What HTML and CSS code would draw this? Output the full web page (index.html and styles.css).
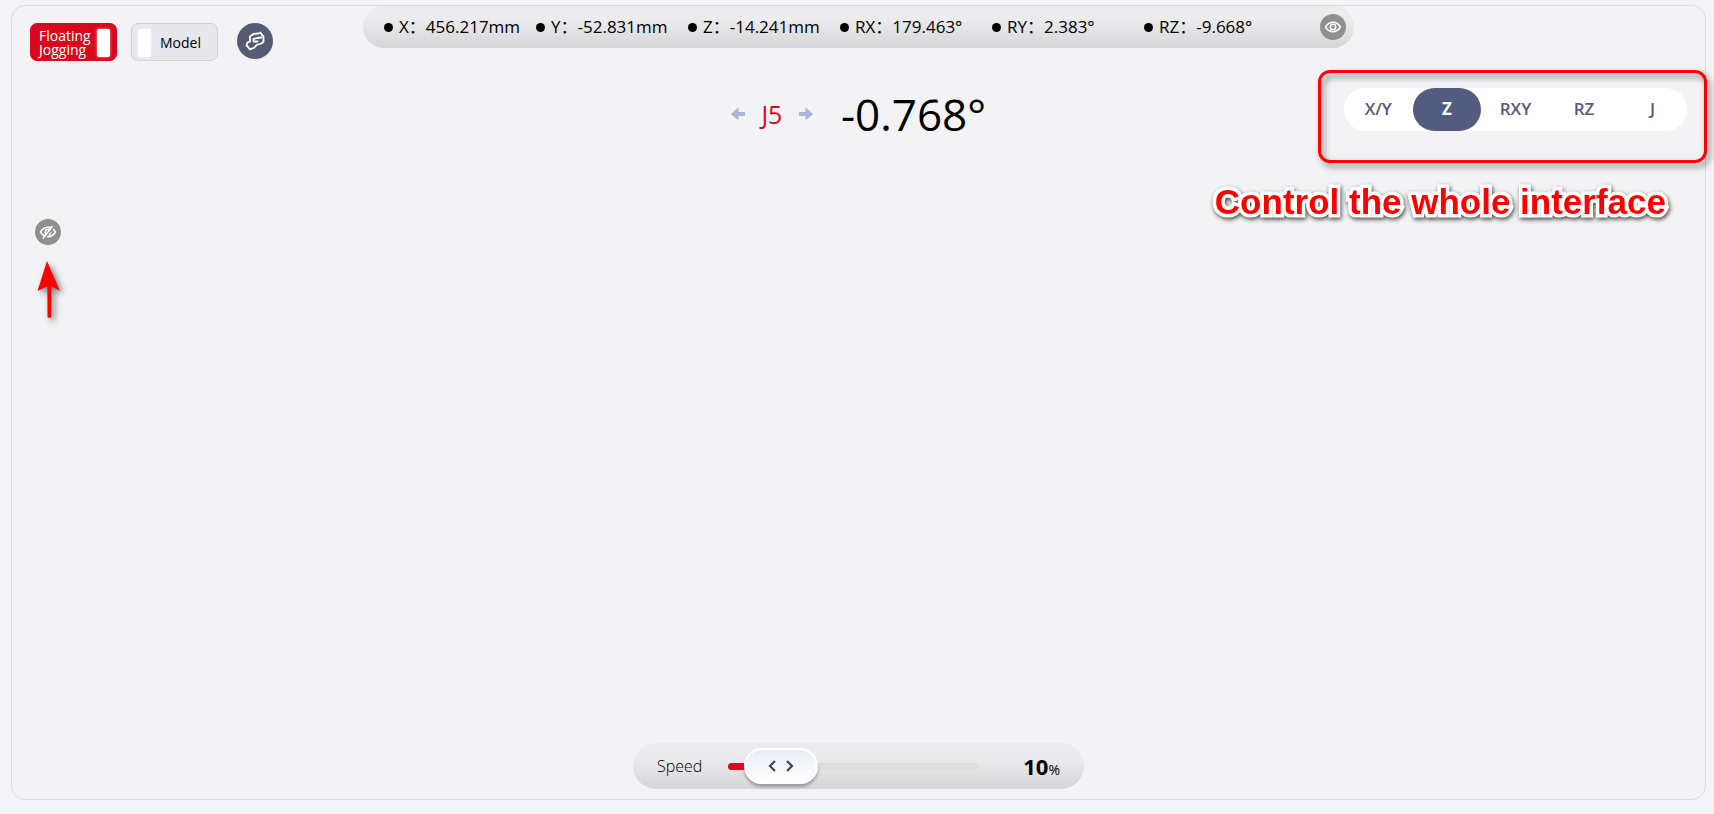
FILE: index.html
```
<!DOCTYPE html>
<html lang="en">
<head>
    <meta charset="UTF-8">
    <meta name="viewport" content="width=device-width, initial-scale=1.0">
    <title>Floating Jogging</title>
    <link rel="stylesheet" href="styles.css">
</head>
<body>
    <main class="panel">
        <header class="top-bar">
            <div class="tools">
                <button class="toggle toggle-on" type="button" aria-pressed="true">
                    <span class="toggle-text">Floating Jogging</span>
                    <span class="knob"></span>
                </button>
                <button class="toggle" type="button" aria-pressed="false">
                    <span class="knob"></span>
                    <span class="toggle-text">Model</span>
                </button>
                <button class="round-button" type="button" aria-label="Robot">
                    <svg width="36" height="36" viewBox="0 0 36 36" fill="none" stroke="#fff" stroke-width="1.8" stroke-linejoin="round" stroke-linecap="round">
                        <path d="M13 18.500V13.500L16.500 11L21.500 10.500L23.500 9.500L25 12L26.500 13.500V18.500L24.500 20.500L19.500 22L17.500 24.500L13 26.500L11.500 24.500L9.500 22.500L10.500 19.500Z"/>
                        <path d="M24.500 14.500L20 15L16.500 16V18.500H20.500"/>
                    </svg>
                </button>
            </div>

            <div class="coords">
                <ul class="coord-list">
                    <li>X：<span>456.217mm</span></li>
                    <li>Y：<span>-52.831mm</span></li>
                    <li>Z：<span>-14.241mm</span></li>
                    <li>RX：<span>179.463°</span></li>
                    <li>RY：<span>2.383°</span></li>
                    <li>RZ：<span>-9.668°</span></li>
                </ul>
                <button class="eye-button" type="button" aria-label="Hide coordinates">
                    <svg width="26" height="26" viewBox="0 0 26 26" fill="none" stroke="#fff" stroke-width="1.5">
                        <path d="M5.500 13C9.500 6.800 16.500 6.800 20.500 13C16.500 19.200 9.500 19.200 5.500 13Z"/>
                        <circle cx="13" cy="13" r="2.700"/>
                    </svg>
                </button>
            </div>
        </header>

        <section class="status-row">
            <div class="readout">
                <svg width="14" height="14" viewBox="0 0 14 14" fill="#a9b6dc"><path d="M0 7L7.500 .5V5H14V9H7.500V13.500Z"/></svg>
                <span class="joint">J5</span>
                <svg width="14" height="14" viewBox="0 0 14 14" fill="#a9b6dc"><path d="M14 7L6.500 .5V5H0V9H6.500V13.500Z"/></svg>
                <span class="angle">-0.768°</span>
            </div>

            <div class="modes">
                <nav class="tabs">
                    <button type="button">X/Y</button>
                    <button class="active" type="button">Z</button>
                    <button type="button">RXY</button>
                    <button type="button">RZ</button>
                    <button type="button">J</button>
                </nav>
                <div class="callout-frame"></div>
                <p class="callout-text">Control the whole interface</p>
            </div>
        </section>

        <aside class="side">
            <button class="eye-button" type="button" aria-label="Show controls">
                <svg width="26" height="26" viewBox="0 0 26 26" fill="none" stroke="#fff" stroke-width="1.5">
                    <path d="M5.500 13C9.500 6.800 16.500 6.800 20.500 13C16.500 19.200 9.500 19.200 5.500 13Z"/>
                    <circle cx="13" cy="13" r="2.700"/>
                    <path d="M9.300 19.700L18.700 7.700" stroke="#8f8f8f" stroke-width="2"/>
                    <path d="M8 19.500L17.500 7"/>
                </svg>
            </button>
            <svg class="callout-arrow" width="26" height="60" viewBox="0 0 26 60">
                <path d="M12 1L25 31L16.500 26.500L16.300 57Q14.500 59 12.500 57L12.300 26.500L2.500 31Z" fill="#f00"/>
            </svg>
        </aside>

        <footer class="speed">
            <label for="speed">Speed</label>
            <input type="range" id="speed" min="1" max="100" value="10">
            <output for="speed"><b id="speedValue">10</b>%</output>
        </footer>
    </main>

    <script>
        document.getElementById("speed").addEventListener("input", function () {
            document.getElementById("speedValue").textContent = this.value;
            this.style.setProperty("--fill", this.value + "%");
        });
    </script>
</body>
</html>
```

FILE: styles.css
```
* {
    box-sizing: border-box;
}

body {
    margin: 0;
    padding: 5px 8px 14px 11px;
    min-height: 100vh;
    display: flex;
    background-color: #f3f4f6;
    font-family: "Open Sans", "Noto Sans CJK SC", sans-serif;
    color: #000;
}

button {
    border: none;
    padding: 0;
    font-family: inherit;
    cursor: pointer;
}

svg {
    display: block;
}

.panel {
    flex: 1;
    display: flex;
    flex-direction: column;
    border: 1px solid #d9dbdf;
    border-radius: 14px;
    background-color: #f3f3f5;
}

/* Top bar */
.top-bar {
    display: grid;
    grid-template-columns: 1fr auto 1fr;
    align-items: start;
}

.tools {
    display: flex;
    margin: 17px 0 0 18px;
}

.toggle {
    display: flex;
    align-items: center;
    justify-content: space-between;
    width: 87px;
    height: 38px;
    margin-right: 14px;
    padding: 2px 16px 0 6px;
    border: 1px solid #d0d3da;
    border-radius: 7px;
    background-color: #e6e8ee;
    color: #000;
    font-size: 14px;
    line-height: 14px;
    text-align: left;
}

.toggle-on {
    padding: 2px 6px 0 8px;
    border-color: #d9091d;
    background-color: #d9091d;
    color: #fff;
}

.toggle-on .toggle-text {
    width: 54px;
}

.knob {
    width: 13px;
    height: 28px;
    border-radius: 2px;
    background-color: #fff;
    box-shadow: 0 0 3px rgba(255, 255, 255, 0.6);
}

.round-button {
    width: 36px;
    height: 36px;
    margin-left: 5px;
    border-radius: 50%;
    background-color: #565b74;
}

/* Coordinates */
.coords {
    display: flex;
    align-items: center;
    justify-content: space-between;
    width: 991px;
    height: 42px;
    padding: 0 8px 0 21px;
    border-radius: 21px;
    background: linear-gradient(#ececee 30%, #d6d6d8);
}

.coord-list {
    display: flex;
    margin: 0;
    padding: 0;
    list-style: none;
    font-size: 17px;
    font-weight: 380;
    line-height: 24px;
}

.coord-list li {
    display: flex;
    align-items: center;
    width: 152px;
    white-space: nowrap;
}

.coord-list li::before {
    content: "";
    width: 9px;
    height: 9px;
    margin-right: 6px;
    border-radius: 50%;
    background-color: #000;
}

.eye-button {
    width: 26px;
    height: 26px;
    border-radius: 50%;
    background-color: #8f8f8f;
}

/* Readout and mode tabs */
.status-row {
    display: grid;
    grid-template-columns: 1fr auto 1fr;
    align-items: start;
    margin-top: 27px;
}

.readout {
    grid-column: 2;
    display: flex;
    align-items: center;
    height: 52px;
}

.joint {
    width: 54px;
    color: #d9091d;
    font-size: 25px;
    font-weight: 500;
    text-align: center;
}

.angle {
    margin-left: 28px;
    font-size: 44px;
    line-height: 52px;
}

.modes {
    position: relative;
    justify-self: end;
    margin-right: 18px;
}

.tabs {
    display: flex;
    width: 343px;
    border-radius: 22px;
    background-color: #fff;
}

.tabs button {
    flex: 1;
    height: 43px;
    padding-bottom: 3px;
    border-radius: 22px;
    background: none;
    color: #535a7c;
    font-size: 17px;
    font-weight: 600;
}

.tabs .active {
    background-color: #535b80;
    color: #fff;
    font-weight: 700;
}

/* Callouts lie over the panel */
.callout-frame {
    position: absolute;
    top: -18px;
    right: -20px;
    bottom: -32px;
    left: -26px;
    border: 3px solid #f00;
    border-radius: 12px;
    filter: drop-shadow(3px 4px 3px rgba(0, 0, 0, 0.5));
    pointer-events: none;
}

.callout-text {
    position: absolute;
    top: 94px;
    right: 21px;
    margin: 0;
    color: #f00;
    font: bold 35px/40px "Liberation Sans", Arial, sans-serif;
    white-space: nowrap;
    -webkit-text-stroke: 7px #fff;
    paint-order: stroke fill;
    filter: drop-shadow(1px 2px 2px rgba(0, 0, 0, 0.7));
}

.side {
    margin: 79px 0 0 23px;
}

.callout-arrow {
    margin-top: 10px;
    overflow: visible;
    filter: drop-shadow(3px 3px 3px rgba(0, 0, 0, 0.5));
}

/* Speed slider */
.speed {
    display: flex;
    align-items: center;
    width: 451px;
    height: 46px;
    margin: auto auto 10px;
    padding: 0 24px;
    border-radius: 23px;
    background: linear-gradient(#ececee 30%, #d6d6d8);
    font-size: 16px;
    font-weight: 350;
}

.speed label {
    width: 71px;
}

.speed input {
    --fill: 10%;
    -webkit-appearance: none;
    appearance: none;
    width: 250px;
    height: 7px;
    margin: 0;
    border-radius: 4px;
    background: linear-gradient(to right, #d9091d var(--fill), #dededf var(--fill));
}

.speed input::-webkit-slider-thumb {
    -webkit-appearance: none;
    width: 74px;
    height: 36px;
    border: 2px solid #fff;
    border-radius: 18px;
    background: url("data:image/svg+xml,%3Csvg xmlns='http://www.w3.org/2000/svg' width='26' height='12' fill='none' stroke='%23414656' stroke-width='2.2'%3E%3Cpath d='M7 1L2 6L7 11M19 1L24 6L19 11'/%3E%3C/svg%3E") center no-repeat, linear-gradient(#e9edf3, #fff);
    box-shadow: 0 3px 3px rgba(90, 95, 110, 0.5);
}

.speed output {
    margin-left: auto;
    font-size: 14px;
    font-weight: 400;
}

.speed b {
    font-size: 22px;
}
```
